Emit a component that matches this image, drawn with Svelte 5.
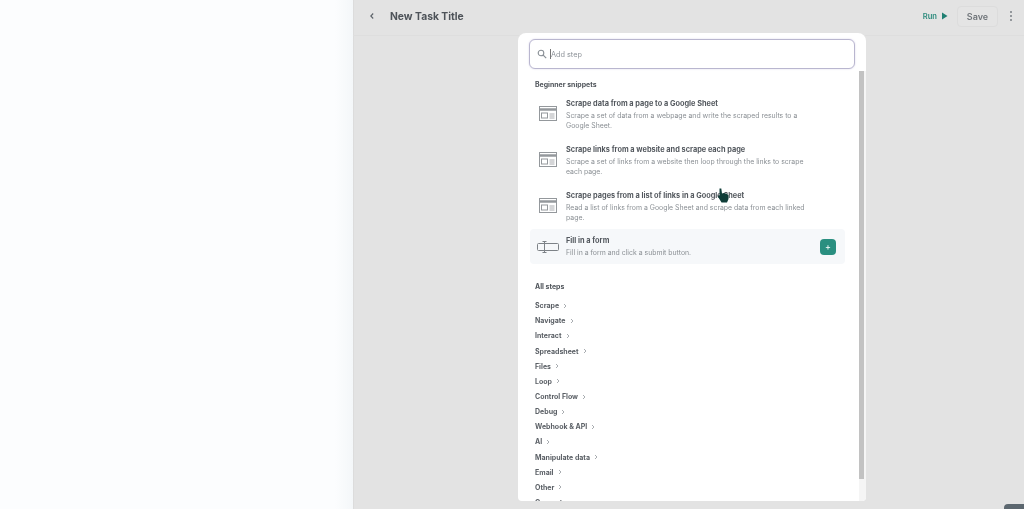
<script lang="ts">
  const snippets = [
    { title: "Scrape data from a page to a Google Sheet", desc: "Scrape a set of data from a webpage and write the scraped results to a Google Sheet." },
    { title: "Scrape links from a website and scrape each page", desc: "Scrape a set of links from a website then loop through the links to scrape each page." },
    { title: "Scrape pages from a list of links in a Google Sheet", desc: "Read a list of links from a Google Sheet and scrape data from each linked page." }
  ];
  const steps = ["Scrape", "Navigate", "Interact", "Spreadsheet", "Files", "Loop", "Control Flow", "Debug", "Webhook & API", "AI", "Manipulate data", "Email", "Other", "Generate"];
</script>

<div class="page">
  <aside class="side"></aside>
  <main class="main">
    <header class="top">
      <svg class="back" width="8" height="10" viewBox="0 0 8 10"><path d="M5.200 2.500 2.800 5l2.400 2.500" fill="none" stroke="#5b6168" stroke-width="1.100"/></svg>
      <h1>New Task Title</h1>
      <span class="run">Run <svg width="7" height="8" viewBox="0 0 7 8"><path d="M1 .5 6.500 4 1 7.500z" fill="#1f7f72"/></svg></span>
      <button type="button" class="save">Save</button>
      <svg class="more" width="4" height="12" viewBox="0 0 4 12"><circle cx="2" cy="2" r="1" fill="#7a7f84"/><circle cx="2" cy="6" r="1" fill="#7a7f84"/><circle cx="2" cy="10" r="1" fill="#7a7f84"/></svg>
    </header>

    <section class="panel">
      <div class="search">
        <svg width="10" height="10" viewBox="0 0 10 10"><circle cx="4" cy="4" r="2.800" fill="none" stroke="#8a9096" stroke-width="1.100"/><path d="m6.200 6.200 3 3" stroke="#8a9096" stroke-width="1.200"/></svg>
        <span class="caret"></span><span class="ph">Add step</span>
      </div>
      <div class="body">
        <div class="list">
          <h2>Beginner snippets</h2>
          {#each snippets as s}
            <div class="snip">
              <svg class="ico" width="18" height="15" viewBox="0 0 18 15" fill="none" stroke="#94989c"><rect x=".5" y=".5" width="17" height="14" fill="#fff"/><path d="M.5 3.500h17" stroke-width="2.400"/><rect x="2.500" y="7" width="6" height="5"/><path d="M10.500 8h5M10.500 10h5M10.500 12h5" stroke-width=".8"/></svg>
              <div class="txt">
                <b>{s.title}</b>
                <p>{s.desc}</p>
              </div>
            </div>
          {/each}
          <div class="snip on">
            <svg class="ico form" width="22" height="12" viewBox="0 0 22 12" fill="none" stroke="#7d8287"><rect x=".5" y="2.500" width="21" height="7" rx="1"/><path d="M7.500.5v11M5.500.5h4M5.500 11.500h4"/></svg>
            <div class="txt">
              <b>Fill in a form</b>
              <p>Fill in a form and click a submit button.</p>
            </div>
            <span class="add">+</span>
          </div>
          <h2 class="all">All steps</h2>
          <ul>
            {#each steps as st}
              <li>{st}<svg width="4" height="6" viewBox="0 0 4 6"><path d="m1 1 2 2-2 2" fill="none" stroke="#a9adb1"/></svg></li>
            {/each}
          </ul>
        </div>
        <div class="bar"><div class="thumb"></div></div>
      </div>
    </section>

    <svg class="cursor" width="12" height="15" viewBox="0 0 12 15"><path d="M2.500.5h1.800l.7 5 1.500-.5 1.500.5 1.800.3 1.700 1.500V11l-1.500 3.500H4.500L1.800 10 .5 7.500 2.500 8z" fill="#0f3d38"/></svg>
    <div class="chip"></div>
  </main>
</div>

<style>
  :global(body) { margin: 0; background: #e3e3e3; font-family: Inter, "Liberation Sans", sans-serif; }
  .page { display: flex; width: 1024px; height: 509px; overflow: hidden; filter: blur(.35px); }
  .side { width: 353px; flex: none; background: linear-gradient(90deg, #fcfdfe 0, #fcfdfe 335px, #f4f7f9 353px); }
  .main { position: relative; flex: 1; background: #e3e3e3; box-shadow: inset 1px 0 0 #dcdcdc; display: flex; flex-direction: column; align-items: flex-start; }
  .top { box-sizing: border-box; width: 100%; height: 36px; flex: none; display: flex; align-items: center; padding: 0 11px 3px 15px; border-bottom: 1px solid #dedede; }
  h1 { margin: 0 0 0 14px; font-size: 10.300px; font-weight: 700; color: #4e5359; }
  .run { margin-left: auto; display: flex; align-items: center; gap: 4px; font-size: 7.600px; font-weight: 600; color: #2b8a7c; }
  .save { margin-left: 9px; width: 41px; height: 21px; padding: 0; border: 1px solid #dcdcdc; border-radius: 4px; background: #e4e4e4; color: #70757a; font: 600 9px Inter, sans-serif; }
  .more { margin-left: 11px; }
  .panel { box-sizing: border-box; margin: -3px 0 0 165px; width: 348px; height: 468px; flex: none; position: relative; z-index: 1; background: #fff; border-radius: 8px 8px 4px 4px; padding: 6px 11px 0; overflow: hidden; display: flex; flex-direction: column; }
  .search { box-sizing: border-box; height: 30px; flex: none; display: flex; align-items: center; padding-left: 7px; border: 1px solid #b9b6cf; border-radius: 6px; background: #fff; box-shadow: 0 0 2px #d8d5e8; }
  .caret { width: 1px; height: 10px; background: #777; margin-left: 3px; }
  .ph { font-size: 7.300px; color: #8e9399; }
  .body { flex: 1; min-height: 0; display: flex; margin: 0 -11px 0 0; }
  .list { flex: 1; min-width: 0; overflow: hidden; }
  h2 { margin: 10px 0 0 6px; font-size: 6.950px; line-height: 11px; font-weight: 700; color: #4e5359; }
  .snip { box-sizing: border-box; height: 46px; width: 315px; margin-left: 1px; display: flex; align-items: flex-start; padding: 4px 9px 0 8px; border-radius: 4px; }
  h2 + .snip { margin-top: 4px; }
  .ico { flex: none; margin: 8px 0 0 1px; }
  .txt { margin-left: 9px; }
  .txt b { display: block; font-size: 7.350px; line-height: 11px; font-weight: 700; color: #53585e; white-space: nowrap; }
  .txt p { margin: 2px 0 0; width: 240px; font-size: 6.900px; line-height: 10px; color: #8b9095; }
  .snip.on { height: 35px; margin-top: -3px; background: #f6f8fa; align-items: center; padding-top: 0; }
  .snip.on .ico { margin: 0 0 0 -1px; }
  .snip.on .txt { margin-left: 7px; }
  .add { margin-left: auto; width: 16px; height: 16px; border-radius: 4px; background: #2a8f80; color: #fff; font-size: 9px; line-height: 16px; text-align: center; }
  h2.all { margin-top: 17px; }
  ul { list-style: none; margin: 6px 0 0 6px; padding: 0; }
  li { height: 15.170px; display: flex; align-items: center; gap: 4px; font-size: 7px; font-weight: 700; color: #5a5f65; }
  .bar { width: 7px; flex: none; margin-top: 2px; background: #f5f5f5; }
  .thumb { width: 5px; height: 408px; background: #c2c2c2; }
  .cursor { position: absolute; left: 364px; top: 188px; z-index: 2; }
  .chip { position: absolute; right: 0; bottom: 0; width: 20px; height: 5px; border-radius: 4px 0 0 0; background: #5c676f; }
</style>
